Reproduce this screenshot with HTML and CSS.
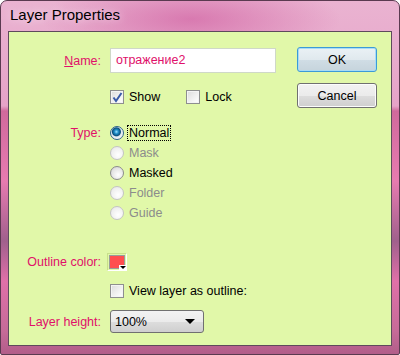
FILE: index.html
```html
<!DOCTYPE html>
<html lang="en">
  <head>
    <meta charset="UTF-8" />
    <title>Layer Properties</title>
    <link rel="stylesheet" href="styles.css">
  </head>
  <body>
    <!-- Window frame -->
    <div class="window">
      <div class="titlebar">Layer Properties</div>

      <!-- Client area -->
      <div class="client">
        <div class="form">
          <!-- Name -->
          <div class="row name-row">
            <span class="label"><u>N</u>ame:</span>
            <div class="input">отражение2</div>
          </div>

          <!-- Show / Lock -->
          <div class="row check-row">
            <span class="label"></span>
            <span class="checkbox checked">
              <svg width="11" height="11" viewBox="0 0 11 11">
                <path d="M1.5 5.5 L4 9 L9.5 1" fill="none" stroke="#3a5ba8" stroke-width="2" />
              </svg>
            </span>
            <span class="check-text">Show</span>
            <span class="checkbox lock-box"></span>
            <span class="check-text">Lock</span>
          </div>

          <!-- Type -->
          <div class="type-block">
            <div class="row radio-row">
              <span class="label">Type:</span>
              <span class="radio selected"></span>
              <span class="radio-text focus">Normal</span>
            </div>
            <div class="row radio-row">
              <span class="label"></span>
              <span class="radio disabled"></span>
              <span class="radio-text dim">Mask</span>
            </div>
            <div class="row radio-row">
              <span class="label"></span>
              <span class="radio"></span>
              <span class="radio-text">Masked</span>
            </div>
            <div class="row radio-row">
              <span class="label"></span>
              <span class="radio disabled"></span>
              <span class="radio-text dim">Folder</span>
            </div>
            <div class="row radio-row">
              <span class="label"></span>
              <span class="radio disabled"></span>
              <span class="radio-text dim">Guide</span>
            </div>
          </div>

          <!-- Outline color -->
          <div class="row outline-row">
            <span class="label">Outline color:</span>
            <span class="swatch">
              <span class="swatch-fill"></span>
              <span class="swatch-arrow"></span>
            </span>
          </div>

          <!-- View as outline -->
          <div class="row view-row">
            <span class="label"></span>
            <span class="checkbox"></span>
            <span class="check-text">View layer as outline:</span>
          </div>

          <!-- Layer height -->
          <div class="row height-row">
            <span class="label">Layer height:</span>
            <div class="select">
              <span>100%</span>
              <span class="select-arrow"></span>
            </div>
          </div>
        </div>

        <!-- Buttons -->
        <div class="buttons">
          <button class="button ok-button">OK</button>
          <button class="button">Cancel</button>
        </div>
      </div>
    </div>
  </body>
</html>
```

FILE: styles.css
```css
* {
  margin: 0;
  padding: 0;
  box-sizing: border-box;
}
body {
  margin: 0;
  padding: 0;
  font-family: "Liberation Sans", Arial, sans-serif;
  font-size: 12.5px;
  width: 400px;
  height: 355px;
  overflow: hidden;
}

.window {
  width: 400px;
  height: 355px;
  border: 1px solid #5a3a50;
  border-radius: 7px 7px 2px 2px;
  background:
    radial-gradient(ellipse 150px 40px at 190px 18px, rgba(205, 85, 155, 0.6), transparent),
    linear-gradient(to bottom, #eab3d1 0px, #e6a3c8 105px, #d06a9c 110px, #e77bb0 180px, #a0608c 240px, #e070a8 280px, #c66b98 330px, #b05c88 355px);
  display: flex;
  flex-direction: column;
}

.titlebar {
  height: 30px;
  padding: 5px 0 0 9px;
  font-size: 15px;
  color: #000;
  text-shadow: 0 0 8px rgba(255, 240, 250, 0.9);
}

.client {
  margin: 0 7px;
  height: 315px;
  background-color: #e1f8a9;
  border: 1px solid #5e4a5c;
  display: flex;
}

.form {
  width: 287px;
  padding-top: 16px;
}

.row {
  display: flex;
  align-items: center;
}

.label {
  width: 92px;
  flex-shrink: 0;
  text-align: right;
  color: #e0106a;
  margin-right: 9px;
}

.label u {
  text-decoration: underline;
}

/* Name */
.name-row {
  height: 25px;
}
.input {
  width: 166px;
  height: 25px;
  background-color: #fff;
  border: 1px solid #cfd8c8;
  color: #e0106a;
  padding: 4px 0 0 5px;
}

/* Checkboxes */
.check-row {
  margin-top: 17px;
  height: 14px;
}
.checkbox {
  width: 14px;
  height: 14px;
  border: 1px solid #8e8f8f;
  background: linear-gradient(135deg, #dcdcdc, #f6f6f6 70%, #fff);
  box-shadow: inset 0 0 0 1px #f4f4f4;
  display: flex;
  align-items: center;
  justify-content: center;
  flex-shrink: 0;
}
.check-text {
  margin-left: 5px;
  color: #000;
}
.lock-box {
  margin-left: 26px;
}

/* Radios */
.type-block {
  margin-top: 19px;
}
.radio-row {
  height: 20px;
}
.radio {
  width: 14px;
  height: 14px;
  border-radius: 50%;
  border: 1px solid #8c8c8c;
  background: radial-gradient(circle at 60% 65%, #fff, #e4e4e4 60%, #c8c8c8);
  flex-shrink: 0;
}
.radio.disabled {
  border-color: #c4c4c4;
  background: radial-gradient(circle at 60% 65%, #fff, #f0f0f0 60%, #e2e2e2);
}
.radio.selected {
  border-color: #2c628b;
  background: radial-gradient(circle at 45% 40%, #9fe3ff 0, #1f8dc7 2px, #0a4f7d 4px, #dfe9ef 5px, #f6f6f6 7px);
}
.radio-text {
  margin-left: 4px;
  color: #000;
  padding: 0 1px;
}
.radio-text.dim {
  color: #8c8c8c;
}
.radio-text.focus {
  outline: 1px dotted #000;
}

/* Outline color */
.outline-row {
  margin-top: 29px;
  height: 20px;
}
.outline-row .label {
  margin-right: 6px;
}
.swatch {
  position: relative;
  width: 20px;
  height: 18px;
  border: 1px solid #c7e08a;
  border-right-color: #fff;
  border-bottom-color: #fff;
  padding: 1px;
}
.swatch-fill {
  display: block;
  width: 100%;
  height: 100%;
  background-color: #ff4f4f;
  border: 1px solid #9a9a9a;
}
.swatch-arrow {
  position: absolute;
  right: -1px;
  bottom: -1px;
  width: 8px;
  height: 6px;
  background-color: #fff;
}
.swatch-arrow:after {
  content: "";
  position: absolute;
  left: 1px;
  top: 1px;
  border-left: 3px solid transparent;
  border-right: 3px solid transparent;
  border-top: 3px solid #000;
}

/* View as outline */
.view-row {
  margin-top: 9px;
  height: 20px;
}

/* Layer height */
.height-row {
  margin-top: 9px;
  height: 23px;
}
.select {
  width: 94px;
  height: 23px;
  border: 1px solid #707070;
  border-radius: 3px;
  background: linear-gradient(to bottom, #f2f2f2 0%, #ebebeb 50%, #dddddd 51%, #cfcfcf 100%);
  display: flex;
  align-items: center;
  justify-content: space-between;
  padding: 0 8px 0 4px;
  color: #000;
}
.select-arrow {
  border-left: 5px solid transparent;
  border-right: 5px solid transparent;
  border-top: 5px solid #000;
}

/* Buttons */
.buttons {
  padding-top: 15px;
  padding-left: 1px;
  display: flex;
  flex-direction: column;
  gap: 11px;
}
.button {
  width: 80px;
  height: 25px;
  border: 1px solid #707070;
  border-radius: 3px;
  background: linear-gradient(to bottom, #f2f2f2 0%, #ebebeb 50%, #dddddd 51%, #cfcfcf 100%);
  font-family: "Liberation Sans", Arial, sans-serif;
  font-size: 12.5px;
  color: #000;
  box-shadow: inset 0 0 0 1px #fcfcfc;
}
.ok-button {
  border-color: #3c9ad8;
  background: linear-gradient(to bottom, #eaf1f5 0%, #e0e9ee 50%, #d0dde5 51%, #c6d4dc 100%);
  box-shadow: inset 0 0 0 1px #a8dcf4;
}
```
